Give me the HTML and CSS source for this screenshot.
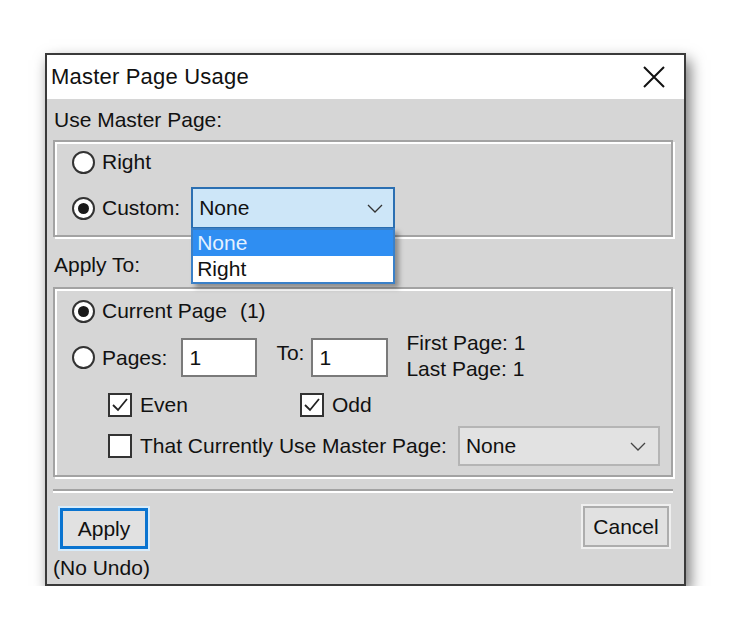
FILE: index.html
```html
<!DOCTYPE html>
<html lang="en">
<head>
  <meta charset="UTF-8" />
  <title>Master Page Usage</title>
  <link rel="stylesheet" href="styles.css">
</head>
<body>
  <div class="dialog">
    <div class="titlebar">
      <span class="title">Master Page Usage</span>
      <svg class="close" width="22" height="22" viewBox="0 0 22 22">
        <path d="M1 1 L21 21 M21 1 L1 21" stroke="#111" stroke-width="2" fill="none" />
      </svg>
    </div>

    <div class="content">
      <div class="label first">Use Master Page:</div>
      <div class="group group-top">
        <div class="row row-right">
          <span class="radio"></span>
          <span class="text">Right</span>
        </div>
        <div class="row row-custom">
          <span class="radio checked"></span>
          <span class="text">Custom:</span>
          <div class="combo open">
            <span class="combo-value">None</span>
            <svg class="chevron" width="16" height="9" viewBox="0 0 16 9">
              <polyline points="1,1 8,8 15,1" stroke="#333" stroke-width="1.3" fill="none" />
            </svg>
            <ul class="combo-list">
              <li class="selected">None</li>
              <li>Right</li>
            </ul>
          </div>
        </div>
      </div>

      <div class="label second">Apply To:</div>
      <div class="group group-bottom">
        <div class="row row-current">
          <span class="radio checked"></span>
          <span class="text">Current Page</span>
          <span class="text count">(1)</span>
        </div>
        <div class="row row-pages">
          <span class="radio"></span>
          <span class="text">Pages:</span>
          <input class="field field-from" type="text" value="1">
          <span class="text to">To:</span>
          <input class="field field-to" type="text" value="1">
          <div class="page-info">
            <div>First Page: 1</div>
            <div>Last Page: 1</div>
          </div>
        </div>
        <div class="row row-parity">
          <label class="check even">
            <span class="box">
              <svg width="20" height="20" viewBox="0 0 20 20"><polyline points="3,10 8,15 17,4" stroke="#222" stroke-width="1.8" fill="none" /></svg>
            </span>
            <span class="text">Even</span>
          </label>
          <label class="check">
            <span class="box">
              <svg width="20" height="20" viewBox="0 0 20 20"><polyline points="3,10 8,15 17,4" stroke="#222" stroke-width="1.8" fill="none" /></svg>
            </span>
            <span class="text">Odd</span>
          </label>
        </div>
        <div class="row row-using">
          <label class="check">
            <span class="box"></span>
            <span class="text">That Currently Use Master Page:</span>
          </label>
          <div class="combo plain">
            <span class="combo-value">None</span>
            <svg class="chevron" width="16" height="9" viewBox="0 0 16 9">
              <polyline points="1,1 8,8 15,1" stroke="#444" stroke-width="1.3" fill="none" />
            </svg>
          </div>
        </div>
      </div>

      <div class="separator"></div>

      <div class="buttons">
        <button class="btn btn-apply">Apply</button>
        <button class="btn btn-cancel">Cancel</button>
      </div>
      <div class="note">(No Undo)</div>
    </div>
  </div>
</body>
</html>
```

FILE: styles.css
```css
body {
  margin: 0;
  background: #ffffff;
  font-family: 'Liberation Sans', Arial, sans-serif;
  font-size: 21px;
  color: #111;
}

.dialog {
  margin: 53px 0 0 45px;
  width: 641px;
  height: 533px;
  box-sizing: border-box;
  border: 2px solid #3a3a3a;
  background: #d6d6d6;
  box-shadow: 4px 7px 14px rgba(0,0,0,0.55);
  display: flex;
  flex-direction: column;
}

.titlebar {
  height: 44px;
  background: #ffffff;
  display: flex;
  align-items: center;
  justify-content: space-between;
  padding: 0 19px 0 4px;
}
.title {
  font-size: 22px;
  letter-spacing: 0.2px;
}

.content {
  flex: 1;
  padding: 0 11px 0 6px;
  display: flex;
  flex-direction: column;
}

.label {
  display: flex;
  align-items: center;
  padding-left: 1px;
}
.label.first { height: 41px; }
.label.second { height: 44px; padding-top: 6px; }

/* etched group box */
.group {
  border: 2px solid #a3a3a3;
  box-shadow: inset 2px 2px 0 #fff, 2px 2px 0 #fff;
  padding-left: 17px;
  display: flex;
  flex-direction: column;
}
.group-top {
  height: 97px;
  box-sizing: border-box;
  gap: 5px;
}
.group-bottom {
  height: 190px;
  box-sizing: border-box;
  padding-top: 2px;
}

.row {
  display: flex;
  align-items: center;
}
.row-right { height: 40px; }
.row-custom { height: 42px; }
.row-current { height: 40px; }
.row-pages { height: 39px; margin-top: 7px; }
.row-parity { height: 40px; margin-top: 8px; padding-left: 36px; }
.row-using { height: 40px; margin-top: 1px; padding-left: 36px; }

.radio {
  width: 23px;
  height: 23px;
  box-sizing: border-box;
  border: 2px solid #333;
  border-radius: 50%;
  background: #fff;
  display: flex;
  align-items: center;
  justify-content: center;
  margin-right: 7px;
  flex-shrink: 0;
}
.radio.checked::after {
  content: "";
  width: 11px;
  height: 11px;
  border-radius: 50%;
  background: #1a1a1a;
}

.text { white-space: nowrap; }
.row-custom .text { margin-right: 11px; }
.count { margin-left: 13px; }

/* combo box */
.combo {
  position: relative;
  height: 42px;
  box-sizing: border-box;
  display: flex;
  align-items: center;
  justify-content: space-between;
  padding: 0 10px 0 6px;
}
.combo.open {
  width: 204px;
  border: 2px solid #2b6fb2;
  background: #cde6f8;
}
.combo.plain {
  width: 202px;
  height: 40px;
  margin-left: 11px;
  border: 2px solid #b5b5b5;
  background: #e2e2e2;
  padding-right: 12px;
}
.combo-list {
  position: absolute;
  top: calc(100% + 1px);
  left: -2px;
  width: 204px;
  box-sizing: border-box;
  margin: 0;
  padding: 0;
  list-style: none;
  border: 2px solid #3a80c8;
  background: #fff;
  box-shadow: 4px 4px 5px rgba(0,0,0,0.35);
  z-index: 2;
}
.combo-list li {
  height: 26px;
  line-height: 26px;
  padding-left: 4px;
}
.combo-list li.selected {
  background: #2f8ef2;
  color: #e4f1ff;
}

/* page range */
.field {
  width: 76px;
  height: 39px;
  box-sizing: border-box;
  border: 2px solid #7a7a7a;
  background: #fff;
  font-family: inherit;
  font-size: 21px;
  padding: 0 6px;
  color: #111;
}
.field-from { margin-left: 14px; }
.to { margin: 0 7px 0 19px; align-self: flex-start; padding-top: 3px; }
.field-to { width: 77px; }
.page-info {
  margin-left: 18px;
  line-height: 26px;
  align-self: flex-start;
  margin-top: -8px;
}

/* check boxes */
.check {
  display: flex;
  align-items: center;
}
.check.even { width: 192px; }
.box {
  width: 24px;
  height: 24px;
  box-sizing: border-box;
  border: 2px solid #333;
  background: #fff;
  display: flex;
  align-items: center;
  justify-content: center;
  margin-right: 8px;
}

.separator {
  margin-top: 12px;
  height: 2px;
  background: #a3a3a3;
  border-bottom: 2px solid #fff;
}

.buttons {
  display: flex;
  justify-content: space-between;
  align-items: flex-start;
  margin-top: 13px;
  padding: 0 4px 0 7px;
}
.btn {
  font-family: inherit;
  font-size: 21px;
  color: #111;
  background: #e1e1e1;
  box-sizing: border-box;
  padding: 0;
}
.btn-apply {
  width: 88px;
  height: 41px;
  margin-top: 2px;
  border: 3px solid #0a74d0;
  box-shadow: 0 0 0 2px #d8ecfb;
}
.btn-cancel {
  width: 86px;
  height: 41px;
  border: 2px solid #adadad;
  box-shadow: 0 0 0 2px #efefef;
}

.note {
  margin-top: 4px;
  height: 30px;
  line-height: 30px;
}
```
